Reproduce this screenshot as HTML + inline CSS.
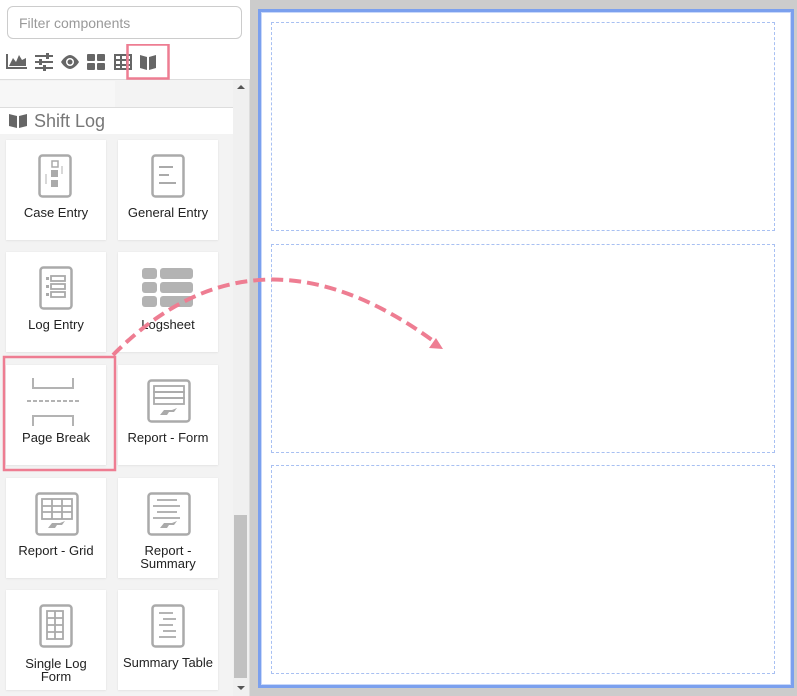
<!DOCTYPE html>
<html><head><meta charset="utf-8">
<style>
*{box-sizing:border-box;margin:0;padding:0}
body{width:797px;height:696px;overflow:hidden;position:relative;background:#cccccc;font-family:"Liberation Sans",sans-serif}
#left{position:absolute;left:0;top:0;width:250px;height:696px;background:#f3f3f3;border-right:1px solid #ddd}
#top{position:absolute;left:0;top:0;width:250px;height:80px;background:#fff;border-bottom:1px solid #ddd}
#filter{position:absolute;left:7px;top:6px;width:235px;height:33px;border:1px solid #ccc;border-radius:6px;color:#999;font-size:14px;padding:8px 11px}
#band{position:absolute;left:0;top:81px;width:115px;height:26px;background:#f7f7f7}
#hdr{position:absolute;left:0;top:107px;width:233px;height:27px;background:#fff;border-top:1px solid #ddd;color:#777;font-size:18px}
#hdr span{position:absolute;left:34px;top:3px}
.card{position:absolute;width:100px;height:100px;background:#fff;box-shadow:0 0 1px rgba(0,0,0,.08),0 1px 2px rgba(0,0,0,.05);font-size:13px;color:#222;text-align:center;line-height:13px}
.card svg{position:absolute;left:25px;top:12px}
.card .l{position:absolute;left:0;right:0;top:66px}
#sb{position:absolute;left:233px;top:80px;width:16px;height:616px;background:#f0f0f0}
#thumb{position:absolute;left:234px;top:515px;width:13px;height:163px;background:#c1c1c1}
#canvas{position:absolute;left:258px;top:9px;width:536px;height:679px;border:3px solid #7ba0ee;background:#fff;box-shadow:inset 0 0 0 1px #c8d8fa}
.dz{position:absolute;left:271px;width:504px;border:1px dashed #a8c0f2}
</style></head><body>
<div id="left">
<div id="top">
<div id="filter">Filter components</div>
<svg style="position:absolute;left:0;top:44px" width="170" height="36">
<g fill="#666">
<path d="M6 10v15h21v-2H8V10z"/><path d="M9 22l4-8 3 4 3-7 3 5 4-2v8z"/>
<rect x="35" y="11" width="18" height="2"/><rect x="35" y="17" width="18" height="2"/><rect x="35" y="23" width="18" height="2"/>
<rect x="46" y="9" width="3" height="6"/><rect x="39" y="15" width="3" height="6"/><rect x="43" y="21" width="3" height="6"/>
<path d="M61 18c3-5 7-7 9-7s6 2 9 7c-3 5-7 7-9 7s-6-2-9-7z"/><circle cx="70" cy="18" r="4" fill="#fff"/><circle cx="70" cy="18" r="2.5"/>
<rect x="87" y="10" width="8" height="7" rx="1"/><rect x="97" y="10" width="8" height="7" rx="1"/><rect x="87" y="19" width="8" height="7" rx="1"/><rect x="97" y="19" width="8" height="7" rx="1"/>
<path d="M114 10h18v16h-18zM116 12v3h4v-3zm6 0v3h4v-3zm6 0v3h2v-3zM116 17v3h4v-3zm6 0v3h4v-3zm6 0v3h2v-3zM116 22v2h4v-2zm6 0v2h4v-2zm6 0v2h2v-2z" fill-rule="evenodd"/>
<path d="M140 11l7 2v13l-7-2zM149 13l7-2v13l-7 2z"/>
</g>
<rect x="127.5" y="0.5" width="41" height="34" fill="none" stroke="#ee7d92" stroke-width="2.5"/>
</svg>
</div>
<div id="band"></div>
<div id="hdr"><svg style="position:absolute;left:8px;top:5px" width="20" height="16"><path fill="#666" d="M1 1l8 2v12l-8-2zM11 3l8-2v12l-8 2z"/></svg><span>Shift Log</span></div>
</div>
<div id="sb"><div style="position:absolute;left:4px;top:5px;border:4px solid transparent;border-bottom:4px solid #555;border-top:0"></div><div style="position:absolute;left:4px;top:606px;border:4px solid transparent;border-top:4px solid #555;border-bottom:0"></div></div>
<div id="thumb"></div>

<div class="card" style="left:6px;top:140px"><svg width="50" height="50"><rect x="8.5" y="3.5" width="31" height="41" rx="3" fill="none" stroke="#aaa" stroke-width="2.5"/><rect x="21" y="9" width="6" height="6" fill="none" stroke="#aaa" stroke-width="1.5"/><rect x="20" y="18" width="7" height="7" fill="#aaa"/><rect x="20" y="28" width="7" height="7" fill="#aaa"/><path d="M15 22v10M31 14v8" stroke="#ccc" stroke-width="1.5"/></svg><div class="l">Case Entry</div></div>
<div class="card" style="left:118px;top:140px"><svg width="50" height="50"><rect x="9.5" y="3.5" width="31" height="41" rx="3" fill="none" stroke="#aaa" stroke-width="2.5"/><path d="M16 15h14M16 23h10M16 31h17" stroke="#aaa" stroke-width="2"/></svg><div class="l">General Entry</div></div>
<div class="card" style="left:6px;top:252px"><svg width="50" height="50"><rect x="9.5" y="3.5" width="31" height="41" rx="3" fill="none" stroke="#aaa" stroke-width="2.5"/><g fill="none" stroke="#aaa" stroke-width="1.8"><rect x="20" y="12" width="14" height="5"/><rect x="20" y="20" width="14" height="5"/><rect x="20" y="28" width="14" height="5"/></g><g fill="#aaa"><rect x="15" y="13" width="3" height="3"/><rect x="15" y="21" width="3" height="3"/><rect x="15" y="29" width="3" height="3"/></g></svg><div class="l">Log Entry</div></div>
<div class="card" style="left:118px;top:252px"><svg width="60" height="50" style="left:24px"><g fill="#b3b3b3"><rect x="0" y="4" width="15" height="11" rx="3"/><rect x="18" y="4" width="33" height="11" rx="3"/><rect x="0" y="18" width="15" height="11" rx="3"/><rect x="18" y="18" width="33" height="11" rx="3"/><rect x="0" y="32" width="15" height="11" rx="3"/><rect x="18" y="32" width="33" height="11" rx="3"/></g></svg><div class="l">Logsheet</div></div>
<div class="card" style="left:6px;top:365px"><svg width="60" height="50" style="left:20px"><g stroke="#b3b3b3" stroke-width="2" fill="none"><path d="M7 1v10h40V1M7 49V39h40v10"/><path d="M1 24h54" stroke-dasharray="4 2"/></g></svg><div class="l">Page Break</div></div>
<div class="card" style="left:118px;top:365px"><svg width="50" height="50"><rect x="5.5" y="3.5" width="41" height="41" rx="3" fill="none" stroke="#aaa" stroke-width="2.5"/><g fill="none" stroke="#aaa" stroke-width="1.8"><rect x="11" y="9" width="30" height="6"/><rect x="11" y="15" width="30" height="6"/><rect x="11" y="21" width="30" height="6"/></g><path d="M17 38l4-5h8l5-2-3 4h-5l-2 3z" fill="#aaa"/></svg><div class="l">Report - Form</div></div>
<div class="card" style="left:6px;top:478px"><svg width="50" height="50"><rect x="5.5" y="3.5" width="41" height="41" rx="3" fill="none" stroke="#aaa" stroke-width="2.5"/><g fill="none" stroke="#aaa" stroke-width="1.8"><rect x="11" y="9" width="30" height="20"/><path d="M21 9v20M31 9v20M11 16h30M11 22h30"/></g><path d="M17 38l4-5h8l5-2-3 4h-5l-2 3z" fill="#aaa"/></svg><div class="l">Report - Grid</div></div>
<div class="card" style="left:118px;top:478px"><svg width="50" height="50"><rect x="5.5" y="3.5" width="41" height="41" rx="3" fill="none" stroke="#aaa" stroke-width="2.5"/><path d="M14 10h20M10 16h27M14 22h20M10 28h27" stroke="#aaa" stroke-width="1.8"/><path d="M17 38l4-5h8l5-2-3 4h-5l-2 3z" fill="#aaa"/></svg><div class="l" style="top:66px">Report -<br>Summary</div></div>
<div class="card" style="left:6px;top:590px"><svg width="50" height="50"><rect x="15.5" y="3.5" width="31" height="41" rx="3" fill="none" stroke="#aaa" stroke-width="2.5" transform="translate(-6 0)"/><g fill="none" stroke="#aaa" stroke-width="1.8"><rect x="16" y="9" width="16" height="28"/><path d="M24 9v28M16 16h16M16 23h16M16 30h16"/></g></svg><div class="l" style="top:67px">Single Log<br>Form</div></div>
<div class="card" style="left:118px;top:590px"><svg width="50" height="50"><rect x="9.5" y="3.5" width="31" height="41" rx="3" fill="none" stroke="#aaa" stroke-width="2.5"/><path d="M16 11h14M20 17h13M16 23h14M20 29h13M16 35h17" stroke="#aaa" stroke-width="1.8"/></svg><div class="l">Summary Table</div></div>

<div id="canvas"></div>
<div class="dz" style="top:22px;height:209px"></div>
<div class="dz" style="top:244px;height:209px"></div>
<div class="dz" style="top:465px;height:209px"></div>

<svg style="position:absolute;left:0;top:0" width="797" height="696">
<rect x="4" y="357" width="111" height="113" fill="none" stroke="#ee7d92" stroke-width="2.5"/>
<path d="M113 355Q255 212 432 340" fill="none" stroke="#ee7d92" stroke-width="4" stroke-dasharray="12 6"/>
<path d="M443 349l-14-1 7-10z" fill="#ee7d92"/>
</svg>
</body></html>
